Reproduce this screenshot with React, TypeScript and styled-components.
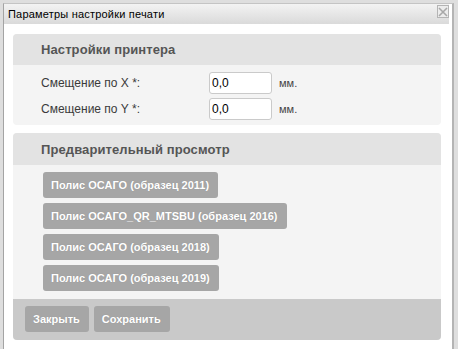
import React from 'react';
import styled, { createGlobalStyle } from 'styled-components';

const GlobalStyle = createGlobalStyle`
  html, body {
    margin: 0;
    padding: 0;
    width: 458px;
    height: 349px;
    overflow: hidden;
    background: #dcdcdc;
    font-family: "Liberation Sans", Arial, sans-serif;
  }
`;

// --- Styled Components ---
const Page = styled.div`
  position: relative;
  width: 458px;
  height: 349px;
  overflow: hidden;
  background: #dedede;
`;

const Dialog = styled.div`
  position: absolute;
  top: 3px;
  left: 3px;
  width: 448px;
  height: 360px;
  background: #ffffff;
  border-top: 1px solid #c4c4c4;
  border-left: 1px solid #a4a4a4;
  border-right: 2px solid #b4b4b4;
  display: flex;
  flex-direction: column;
`;

const TitleBar = styled.div`
  height: 20px;
  margin-right: 3px;
  padding-left: 4px;
  display: flex;
  align-items: center;
  justify-content: space-between;
  background: linear-gradient(#f3f3f3, #dadada);
`;

const Title = styled.span`
  font-size: 11px;
  letter-spacing: 0.2px;
  color: #000;
`;

const CloseButton = styled.button`
  align-self: flex-start;
  margin-top: 1px;
  width: 12px;
  height: 13px;
  padding: 0;
  border: 1px solid #b4b4b4;
  background: #ececec;
  display: flex;
  align-items: center;
  justify-content: center;
  cursor: pointer;
`;

const Content = styled.div`
  padding: 10px 11px 0 9px;
  display: flex;
  flex-direction: column;
  gap: 8px;
`;

const Panel = styled.section`
  border-radius: 4px;
  overflow: hidden;
  background: #f4f4f4;
`;

const PanelHeader = styled.h3<{ $h: number }>`
  margin: 0;
  height: ${({ $h }) => $h}px;
  padding-left: 28px;
  display: flex;
  align-items: center;
  background: #e3e3e3;
  font-size: 13px;
  font-weight: 700;
  color: #555;
  letter-spacing: 0.1px;
`;

const FieldsBody = styled.div`
  padding: 7px 0 5px 28px;
  display: flex;
  flex-direction: column;
  gap: 4px;
`;

const FieldRow = styled.div`
  display: flex;
  align-items: center;
`;

const Label = styled.label`
  width: 168px;
  font-size: 12px;
  color: #3a3a3a;
`;

const Input = styled.input`
  box-sizing: border-box;
  width: 63px;
  height: 22px;
  padding: 0 2px;
  border: 1px solid #cacaca;
  border-radius: 3px;
  background: #fff;
  font-family: "Liberation Sans", Arial, sans-serif;
  font-size: 12px;
  color: #000;
  outline: none;
`;

const Unit = styled.span`
  margin-left: 7px;
  font-size: 11px;
  color: #444;
`;

const ButtonsBody = styled.div`
  padding: 7px 0 8px 30px;
  display: flex;
  flex-direction: column;
  align-items: flex-start;
  gap: 5px;
`;

const Button = styled.button`
  height: 26px;
  padding: 0 9px 0 8px;
  border: none;
  border-radius: 3px;
  background: #a6a6a6;
  color: #fff;
  font-family: "Liberation Sans", Arial, sans-serif;
  font-size: 11px;
  font-weight: 700;
  text-shadow: 0 0 1px rgba(0, 0, 0, 0.15);
  cursor: pointer;
`;

const Footer = styled.div`
  height: 41px;
  box-sizing: border-box;
  padding: 7px 0 0 12px;
  display: flex;
  align-items: flex-start;
  gap: 5px;
  background: #c9c9c9;
`;

const previews = [
  'Полис ОСАГО (образец 2011)',
  'Полис ОСАГО_QR_MTSBU (образец 2016)',
  'Полис ОСАГО (образец 2018)',
  'Полис ОСАГО (образец 2019)',
];

const App: React.FC = () => {
  return (
    <>
      <GlobalStyle />
      <Page>
        <Dialog>
          <TitleBar>
            <Title>Параметры настройки печати</Title>
            <CloseButton aria-label="Закрыть">
              <svg width="10" height="10" viewBox="0 0 10 10">
                <path d="M1 1 L9 9 M9 1 L1 9" stroke="#a8a8a8" strokeWidth="1.6" />
              </svg>
            </CloseButton>
          </TitleBar>
          <Content>
            <Panel>
              <PanelHeader $h={31}>Настройки принтера</PanelHeader>
              <FieldsBody>
                <FieldRow>
                  <Label htmlFor="offx">Смещение по X *:</Label>
                  <Input id="offx" defaultValue="0,0" />
                  <Unit>мм.</Unit>
                </FieldRow>
                <FieldRow>
                  <Label htmlFor="offy">Смещение по Y *:</Label>
                  <Input id="offy" defaultValue="0,0" />
                  <Unit>мм.</Unit>
                </FieldRow>
              </FieldsBody>
            </Panel>
            <Panel>
              <PanelHeader $h={32}>Предварительный просмотр</PanelHeader>
              <ButtonsBody>
                {previews.map((p) => (
                  <Button key={p}>{p}</Button>
                ))}
              </ButtonsBody>
              <Footer>
                <Button>Закрыть</Button>
                <Button>Сохранить</Button>
              </Footer>
            </Panel>
          </Content>
        </Dialog>
      </Page>
    </>
  );
};

export default App;
